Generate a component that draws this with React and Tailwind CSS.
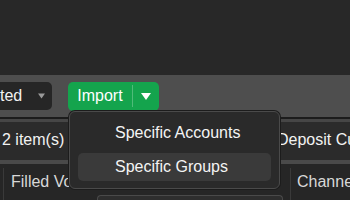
import { useState } from 'react';

// toolbar with an open "Import" split-button menu over a filter row + table header
function Caret({ className }) {
  return (
    <svg viewBox="0 0 10 7" className={className} fill="currentColor">
      <path d="M0 0 L10 0 L5 7 Z" />
    </svg>
  );
}

export default function App() {
  const [active] = useState('groups');
  const items = [
    { id: 'accounts', label: 'Specific Accounts' },
    { id: 'groups', label: 'Specific Groups' },
  ];

  return (
    <div className="relative w-[350px] h-[200px] overflow-hidden bg-[#282828] text-[16px] text-[#f2f2f2] font-['Liberation_Sans',Arial,sans-serif]">
      <div className="h-[75px]" />

      {/* Toolbar */}
      <div className="h-[42px] bg-[#4e4e4e] flex items-center gap-4">
        <div className="-ml-[52px] shrink-0 h-[28px] flex items-center gap-4 pl-3 pr-[7px] rounded-[5px] bg-[#262626]">
          <span className="leading-none whitespace-nowrap">Selected</span>
          <Caret className="w-[7px] h-[6px] text-[#9a9a9a]" />
        </div>
        <div className="shrink-0 h-[29px] flex items-center rounded-[5px] bg-[#14a44d] text-white">
          <span className="pl-[9px] pr-[9px] leading-none">Import</span>
          <span className="w-px h-[22px] bg-white/25" />
          <span className="px-[8px] flex items-center">
            <Caret className="w-[10px] h-[7px]" />
          </span>
        </div>
      </div>
      <div className="h-[2px] bg-[#1c1c1c]" />
      <div className="h-[3px] bg-[#464646]" />

      {/* Filter row */}
      <div className="h-[38px] pb-[3px] bg-[#2b2b2b] flex items-center">
        <span className="shrink-0 w-[277px] pl-[2px] whitespace-nowrap">2 item(s)</span>
        <span className="shrink-0 whitespace-nowrap">Deposit Currency</span>
      </div>
      <div className="h-[4px] bg-[#4a4a4a]" />

      {/* Table header */}
      <div className="h-[40px] bg-[#262626] flex text-[#d8d8d8]">
        <div className="shrink-0 w-[3px]" />
        <div className="shrink-0 w-[287px] mt-[4px] border-l border-[#3a3a3a] pl-[7px] pt-[2px] whitespace-nowrap overflow-hidden">
          Filled Volume (Lots)
        </div>
        <div className="flex-1 min-w-0 mt-[4px] border-l border-[#3a3a3a] pl-[6px] pt-[2px] whitespace-nowrap overflow-hidden">
          Channel
        </div>
      </div>

      {/* Edge of another popup below */}
      <div className="absolute left-[97px] top-[195px] w-[186px] h-[10px] rounded-t-[4px] border-t border-x border-[#4a4a4a] bg-[#2e2e2e]" />

      {/* Import menu */}
      <div className="absolute left-[69px] top-[111px] w-[211px] flex flex-col gap-[6px] px-[8px] py-[7px] rounded-[6px] border border-[#4a4a4a] bg-[#2a2a2a] shadow-[0_0_0_1px_#1c1c1c]">
        {items.map(it => (
          <div
            key={it.id}
            className={`h-[28px] flex items-center pl-[37px] rounded-[5px] whitespace-nowrap text-[#f4f4f4] ${active === it.id ? 'bg-[#3a3a3a]' : ''}`}
          >
            {it.label}
          </div>
        ))}
      </div>
    </div>
  );
}
